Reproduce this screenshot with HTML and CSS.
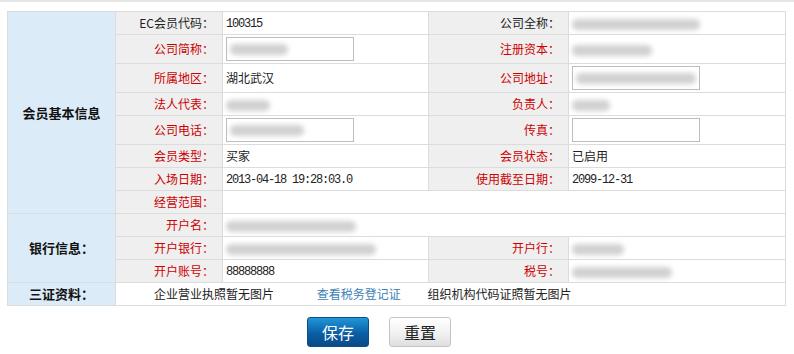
FILE: index.html
```html
<!DOCTYPE html>
<html lang="zh-CN">
<head>
    <meta charset="UTF-8">
    <title>会员信息</title>
    <link rel="stylesheet" href="styles.css">
</head>
<body>
    <div class="topline"></div>
    <table class="member-table">
        <colgroup>
            <col class="c-sec">
            <col class="c-lab">
            <col class="c-val">
            <col class="c-lab2">
            <col class="c-val2">
        </colgroup>
        <tbody>
            <tr class="r-s">
                <th class="sec" rowspan="8">会员基本信息</th>
                <td class="lab black">EC会员代码：</td>
                <td class="val"><span class="num">100315</span></td>
                <td class="lab black">公司全称：</td>
                <td class="val"><span class="blob" style="width:128px"></span></td>
            </tr>
            <tr class="r-l">
                <td class="lab">公司简称：</td>
                <td class="val"><div class="inp"><span class="blob" style="width:58px"></span></div></td>
                <td class="lab">注册资本：</td>
                <td class="val"><span class="blob" style="width:80px"></span></td>
            </tr>
            <tr class="r-l">
                <td class="lab">所属地区：</td>
                <td class="val">湖北武汉</td>
                <td class="lab">公司地址：</td>
                <td class="val"><div class="inp"><span class="blob" style="width:120px"></span></div></td>
            </tr>
            <tr class="r-s">
                <td class="lab">法人代表：</td>
                <td class="val"><span class="blob" style="width:44px"></span></td>
                <td class="lab">负责人：</td>
                <td class="val"><span class="blob" style="width:38px"></span></td>
            </tr>
            <tr class="r-l">
                <td class="lab">公司电话：</td>
                <td class="val"><div class="inp"><span class="blob" style="width:74px"></span></div></td>
                <td class="lab">传真：</td>
                <td class="val"><div class="inp"></div></td>
            </tr>
            <tr class="r-s">
                <td class="lab">会员类型：</td>
                <td class="val">买家</td>
                <td class="lab">会员状态：</td>
                <td class="val">已启用</td>
            </tr>
            <tr class="r-s">
                <td class="lab">入场日期：</td>
                <td class="val"><span class="num">2013-04-18 19:28:03.0</span></td>
                <td class="lab">使用截至日期：</td>
                <td class="val"><span class="num">2099-12-31</span></td>
            </tr>
            <tr class="r-s">
                <td class="lab">经营范围：</td>
                <td class="val" colspan="3"></td>
            </tr>
            <tr class="r-s">
                <th class="sec" rowspan="3">银行信息：</th>
                <td class="lab">开户名：</td>
                <td class="val" colspan="3"><span class="blob" style="width:130px"></span></td>
            </tr>
            <tr class="r-s">
                <td class="lab">开户银行：</td>
                <td class="val"><span class="blob" style="width:150px"></span></td>
                <td class="lab">开户行：</td>
                <td class="val"><span class="blob" style="width:52px"></span></td>
            </tr>
            <tr class="r-s">
                <td class="lab">开户账号：</td>
                <td class="val"><span class="num">88888888</span></td>
                <td class="lab">税号：</td>
                <td class="val"><span class="blob" style="width:100px"></span></td>
            </tr>
            <tr class="r-s">
                <th class="sec">三证资料：</th>
                <td class="docs" colspan="4">
                    <span class="doc">企业营业执照暂无图片</span>
                    <a class="doc doc-link" href="#">查看税务登记证</a>
                    <span class="doc doc-last">组织机构代码证照暂无图片</span>
                </td>
            </tr>
        </tbody>
    </table>

    <div class="actions">
        <button class="btn btn-save" type="button">保存</button>
        <button class="btn btn-reset" type="button">重置</button>
    </div>
</body>
</html>
```

FILE: styles.css
```css
* {
    margin: 0;
    padding: 0;
    box-sizing: border-box;
}

body {
    background: #fff;
    color: #222;
    font-family: "Noto Sans CJK SC", "Liberation Sans", sans-serif;
    font-size: 12px;
}

.topline {
    height: 2px;
    background: #e6e6e6;
}

.member-table {
    margin: 9px 0 0 7px;
    width: 778px;
    border-collapse: collapse;
    table-layout: fixed;
}

.c-sec { width: 108px; }
.c-lab { width: 107px; }
.c-val { width: 206px; }
.c-lab2 { width: 140px; }
.c-val2 { width: 217px; }

.member-table th,
.member-table td {
    border: 1px solid #dcdcdc;
    padding: 0;
    line-height: 14px;
    vertical-align: middle;
}

.r-s { height: 23px; }
.r-l { height: 29px; }

.sec {
    background: #dcebf8;
    font-weight: bold;
    font-size: 13px;
    color: #111;
    text-align: center;
}

.lab {
    background: #efefef;
    color: #cc0000;
    text-align: right;
    padding-right: 8px !important;
    white-space: nowrap;
}

.lab.black {
    color: #222;
}

.val {
    padding-left: 3px !important;
    white-space: nowrap;
}

.num {
    font-family: "Liberation Mono", monospace;
    letter-spacing: -1.2px;
    font-size: 12px;
}

.inp {
    width: 128px;
    height: 24px;
    border: 1px solid #bdbdbd;
    background: #fff;
    display: flex;
    align-items: center;
    padding-left: 3px;
}

.blob {
    display: inline-block;
    height: 11px;
    vertical-align: middle;
    background: #c9c9c9;
    border-radius: 5px;
    filter: blur(2.5px);
    opacity: 0.85;
}

.docs {
    padding-left: 38px !important;
    white-space: nowrap;
}

.doc {
    display: inline-block;
}

.doc-link {
    margin-left: 40px;
    color: #3d82b5;
    text-decoration: none;
}

.doc-last {
    margin-left: 24px;
}

.actions {
    display: flex;
    gap: 20px;
    padding-left: 307px;
    margin-top: 11px;
}

.btn {
    width: 62px;
    height: 30px;
    border-radius: 3px;
    font-family: "Noto Sans CJK SC", sans-serif;
    font-size: 16px;
    cursor: pointer;
}

.btn-save {
    border: 1px solid #0b4f8c;
    color: #fff;
    background: linear-gradient(#2196d8, #0a5ea6 55%, #0b4a86);
}

.btn-reset {
    border: 1px solid #c4c4c4;
    color: #222;
    background: linear-gradient(#ffffff, #f1f1f1 55%, #dedede);
}
```
